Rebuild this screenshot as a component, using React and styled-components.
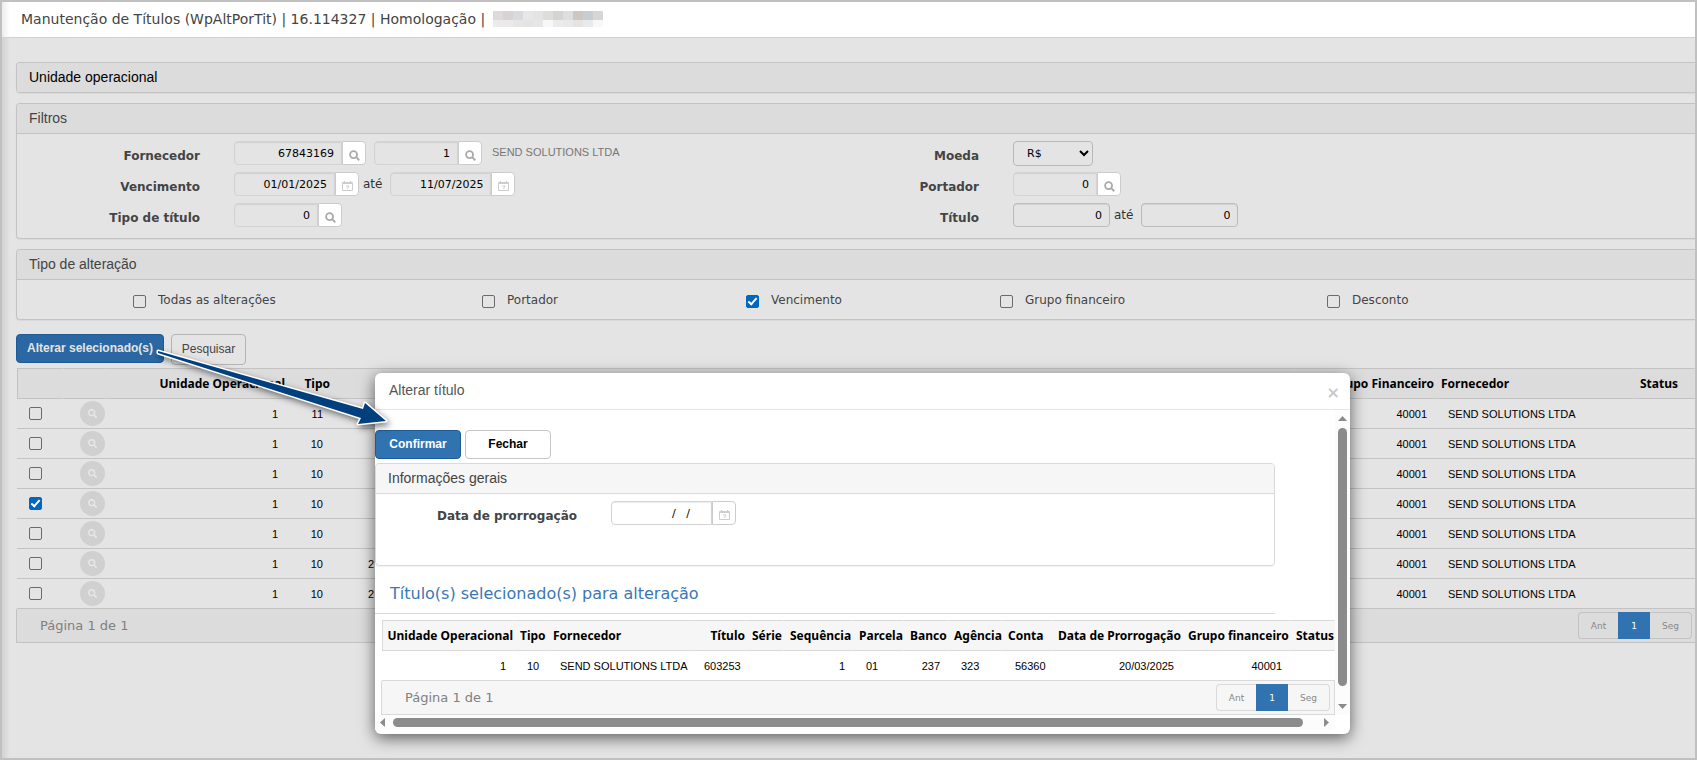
import React, { useState } from 'react';
import styled, { createGlobalStyle } from 'styled-components';
import { FaSearch } from 'react-icons/fa';

const GlobalStyle = createGlobalStyle`
  *, *::before, *::after {
    box-sizing: border-box;
  }

  body {
    margin: 0;
    font-family: "Liberation Sans", Arial, sans-serif;
    font-size: 11px;
    color: #000;
  }

  button, input, select {
    margin: 0;
    font-family: inherit;
  }
`

const verdana = '"DejaVu Sans", Verdana, sans-serif';
const tahoma = '"Noto Sans", Verdana, sans-serif';

const Page = styled.div`
  position: relative;
  min-height: 100vh;
  border: 2px solid #c0c0c0;
  background: linear-gradient(to right, #d2d2d2, #e4e4e4 8px);
  overflow: hidden;
`

const TitleBar = styled.header`
  display: flex;
  align-items: center;
  height: 36px;
  padding: 0 0 2px 19px;
  border-bottom: 1px solid #d2d2d2;
  background: linear-gradient(to right, #ececec, #fff 8px);
`

const PageTitle = styled.h1`
  margin: 0;
  font-family: ${verdana};
  font-size: 14px;
  font-weight: 400;
  line-height: 20px;
  color: #444;
`

const Masked = styled.div`
  display: grid;
  grid-template-columns: repeat(11, 10px);
  grid-template-rows: 9px 7px;
  margin-left: 8px;
`

const MaskCell = styled.span`
  background: ${p => p.$color};
`

const Main = styled.main`
  padding: 24px 0 40px 14px;
`

const Panel = styled.section`
  width: ${p => p.$width || 'auto'};
  margin-bottom: ${p => p.$last ? 14 : 10}px;
  border: 1px solid ${p => p.$light ? '#d9d9d9' : '#c3c3c3'};
  border-right-width: ${p => p.$light ? 1 : 0}px;
  border-radius: ${p => p.$light ? '4px' : '4px 0 0 4px'};
  box-shadow: 0 1px 1px rgba(0, 0, 0, .05);
`

const PanelTitle = styled.h2`
  margin: 0;
  padding: 0 12px;
  border-bottom: ${p => p.$alone ? 0 : 1}px solid ${p => p.$light ? '#d9d9d9' : '#c3c3c3'};
  border-radius: 3px 3px 0 0;
  background: ${p => p.$light ? '#f6f6f6' : '#dcdcdc'};
  font-size: 14px;
  font-weight: 400;
  line-height: 29px;
  color: ${p => p.$alone ? '#000' : '#444'};
`

const Filters = styled.div`
  display: grid;
  grid-template-columns: 1fr 1fr;
  padding: 7px 0 8px;
`

const FilterColumn = styled.div`
  display: flex;
  flex-direction: column;
  gap: 4px;
`

const Field = styled.div`
  display: grid;
  grid-template-columns: ${p => p.$labelWidth}px 1fr;
  column-gap: 34px;
  align-items: start;
`

const Label = styled.label`
  padding-top: 3px;
  font-family: ${verdana};
  font-size: 12px;
  font-weight: 700;
  line-height: 24px;
  text-align: right;
  white-space: nowrap;
  color: #444;
`

const Controls = styled.div`
  display: flex;
  gap: ${p => p.$gap || 8}px;
`

const Group = styled.div`
  display: flex;
`

const Input = styled.input`
  width: ${p => p.$width}px;
  height: 24px;
  padding: 0 7px;
  border: 1px solid ${p => p.$solid ? '#bcbcbc' : '#d3d3d3'};
  border-radius: ${p => p.$joined ? '4px 0 0 4px' : '4px'};
  background: transparent;
  box-shadow: inset 0 1px 1px rgba(0, 0, 0, .08);
  font-family: ${verdana};
  font-size: 11px;
  text-align: right;
  color: #000;
  outline: none;
`

const Select = styled.select`
  width: 80px;
  height: 25px;
  padding: 0 0 0 9px;
  border: 1px solid #b8b8b8;
  border-radius: 4px;
  background: transparent;
  font-family: ${verdana};
  font-size: 11px;
  color: #000;
`

const AddonButton = styled.button`
  display: flex;
  align-items: center;
  justify-content: center;
  width: 24px;
  height: 24px;
  padding: 4px 0 0;
  border: 1px solid #ccc;
  border-radius: 0 4px 4px 0;
  background: #fff;
  color: #aaa;
  cursor: pointer;
`

const Until = styled.span`
  margin-right: 4px;
  font-family: ${verdana};
  font-size: 12px;
  line-height: 24px;
  color: #333;
`

const Description = styled.span`
  padding-left: 2px;
  line-height: 22px;
  color: #777;
`

const Choices = styled.div`
  display: grid;
  grid-template-columns: 349fr 264fr 254fr 327fr 368fr;
  height: 39px;
  padding: 0 0 0 116px;
  align-items: center;
`

const Choice = styled.label`
  display: flex;
  align-items: center;
  gap: 12px;
  padding-top: 4px;
  font-family: ${verdana};
  font-size: 12px;
  line-height: 16px;
  color: #444;

  span {
    padding-bottom: 3px;
  }
`

const Checkbox = styled.input`
  appearance: none;
  display: block;
  flex: none;
  position: relative;
  width: 13px;
  height: 13px;
  margin: 0;
  border: 1px solid #6b6b6b;
  border-radius: 2px;

  &:checked {
    border-color: #0067c0;
    background: #0067c0;
  }

  &:checked::after {
    position: absolute;
    content: '';
    top: 0;
    left: 3px;
    width: 5px;
    height: 9px;
    border: solid #fff;
    border-width: 0 2px 2px 0;
    transform: rotate(42deg);
  }
`

const Actions = styled.div`
  display: flex;
  align-items: flex-start;
  gap: ${p => p.$gap}px;
`

const Button = styled.button`
  min-width: ${p => p.$width}px;
  height: ${p => p.$tall ? 31 : 29}px;
  padding: 0 0 1px;
  border: 1px solid ${p => p.$primary ? '#1e5a96' : p.$tall ? '#b4b4b4' : '#c6c6c6'};
  border-radius: 4px;
  background: ${p => p.$primary ? (p.$dim ? '#2b68a3' : '#3073b0') : 'transparent'};
  font-size: 12px;
  font-weight: ${p => p.$tall ? 400 : 700};
  color: ${p => p.$primary ? (p.$dim ? '#e4e4e4' : '#fff') : p.$tall ? '#444' : '#000'};
  cursor: pointer;
`

const MainGrid = styled.div`
  padding: 3px 0 0 1px;
`

const Table = styled.table`
  width: 100%;
  table-layout: fixed;
  border-collapse: separate;
  border-spacing: 0;
`

const Th = styled.th`
  height: 31px;
  padding: 0 0 0 ${p => p.$align === 'right' ? 0 : 6}px;
  border: 1px solid ${p => p.$light ? '#d9d9d9' : '#c3c3c3'};
  border-left: 0;
  border-right-color: ${p => p.$light ? '#f6f6f6' : '#dcdcdc'};
  background: ${p => p.$light ? '#f6f6f6' : '#dcdcdc'};
  font-family: ${tahoma};
  font-size: 12px;
  font-weight: 700;
  text-align: ${p => p.$align || 'left'};
  white-space: nowrap;

  &:first-child {
    border-left: 1px solid ${p => p.$light ? '#d9d9d9' : '#c3c3c3'};
  }
`

const Td = styled.td`
  height: 30px;
  padding: 0 ${p => p.$align === 'right' ? 8 : 0}px 0 ${p => p.$pad || 13}px;
  border-bottom: 1px solid ${p => p.$light ? '#d9d9d9' : '#c3c3c3'};
  font-size: 11px;
  text-align: ${p => p.$align || 'left'};
  white-space: nowrap;
`

const DetailButton = styled.button`
  display: flex;
  align-items: center;
  justify-content: center;
  width: 25px;
  height: 25px;
  padding: 0;
  border: 0;
  border-radius: 50%;
  background: #d0d0d0;
  color: #e8e8e8;
  cursor: pointer;
`

const TableFooter = styled.div`
  display: flex;
  align-items: center;
  justify-content: space-between;
  height: 34px;
  margin-left: -1px;
  padding: 0 ${p => p.$light ? 4 : 3}px 0 23px;
  border: 1px solid ${p => p.$light ? '#d9d9d9' : '#c3c3c3'};
  border-top: 0;
  border-right-width: ${p => p.$light ? 1 : 0}px;
  background: ${p => p.$light ? '#f6f6f6' : '#dcdcdc'};
  font-family: ${verdana};
  font-size: 13px;
  color: #808080;
`

const Pager = styled.nav`
  display: flex;
  height: 27px;
`

const PageLink = styled.a`
  display: flex;
  align-items: center;
  justify-content: center;
  width: ${p => p.$width}px;
  border: 1px solid ${p => p.$active ? '#3073b0' : p.$light ? '#d9d9d9' : '#c3c3c3'};
  border-width: ${p => p.$active ? '1px 0' : p.$last ? '1px 1px 1px 0' : '1px 0 1px 1px'};
  border-radius: ${p => p.$active ? 0 : p.$last ? '0 4px 4px 0' : '4px 0 0 4px'};
  background: ${p => p.$active ? '#3073b0' : 'transparent'};
  font-size: 9px;
  text-decoration: none;
  color: ${p => p.$active ? '#fff' : '#888'};
`

const Overlay = styled.div`
  position: absolute;
  top: 371px;
  left: 28px;
  right: 0;
  display: flex;
  justify-content: center;
`

const Modal = styled.div`
  width: 975px;
  max-width: 100%;
  padding-bottom: 4px;
  border-radius: 6px;
  background: #fff;
  box-shadow: 0 4px 16px rgba(0, 0, 0, .6);
`

const ModalHeader = styled.div`
  display: flex;
  align-items: center;
  justify-content: space-between;
  height: 37px;
  padding: 0 10px 0 14px;
  border-bottom: 1px solid #e5e5e5;
`

const ModalTitle = styled.h2`
  margin: 0;
  padding-bottom: 2px;
  font-size: 14px;
  font-weight: 400;
  color: #555;
`

const CloseButton = styled.button`
  padding: 3px 0 0;
  border: 0;
  background: none;
  font-family: ${verdana};
  font-size: 16px;
  font-weight: 700;
  line-height: 20px;
  color: #c8c8c8;
  cursor: pointer;
`

const ModalBody = styled.div`
  display: grid;
  grid-template-columns: 1fr 15px;
  grid-template-rows: auto 15px;
`

const ModalContent = styled.div`
  min-width: 0;
  padding-top: 20px;
  overflow: hidden;
`

const ExtensionBody = styled.div`
  height: 71px;
  padding-top: 7px;
`

const PanelSpace = styled.div`
  padding-top: 4px;
`

const SectionTitle = styled.h3`
  width: 900px;
  max-width: 100%;
  margin: 0 0 6px;
  padding: 7px 15px 8px;
  border-bottom: 1px solid #d9d9d9;
  font-family: ${verdana};
  font-size: 16px;
  font-weight: 400;
  line-height: 22px;
  color: #3a77b5;
`

const SelectedGrid = styled.div`
  padding-left: 7px;
`

const ScrollBar = styled.div`
  display: flex;
  flex-direction: ${p => p.$vertical ? 'column' : 'row'};
  align-items: center;
  justify-content: space-between;
  padding: ${p => p.$vertical ? '6px 0' : '0 6px 0 5px'};
  background: #fcfcfc;
`

const ScrollTrack = styled.div`
  display: flex;
  flex: 1;
  flex-direction: ${p => p.$vertical ? 'column' : 'row'};
  padding: ${p => p.$vertical ? '7px 0 18px' : '0 21px 0 8px'};
`

const ScrollThumb = styled.div`
  flex: 1;
  min-width: 9px;
  min-height: 9px;
  border-radius: 5px;
  background: #8b8b8b;
`

const Caret = styled.svg`
  display: block;
  flex: none;
  fill: #8b8b8b;
`

const Arrow = styled.svg`
  position: absolute;
  top: 338px;
  left: 148px;
  pointer-events: none;
  filter: drop-shadow(2px 3px 3px rgba(0, 0, 0, .5));
`

const maskColors = [
  '#dfdad7', '#d4d4d4', '#d9dade', '#e7e7e7', '#e4e5e2', '#dddeda', '#d4d4d4', '#dedede', '#cdc6c2', '#c9cdd1', '#d5d6d7',
  '#ebebeb', '#eaeaea', '#e6e6e6', '#e4e4e4', '#e5e7e7', '#f8f8f8', '#ebebeb', '#e9e9e9', '#e5e4e3', '#e9eaeb', '#f8f8f8',
];

const options = ['Todas as alterações', 'Portador', 'Vencimento', 'Grupo financeiro', 'Desconto'];

const titles = [
  { type: '11', number: '' },
  { type: '10', number: '' },
  { type: '10', number: '' },
  { type: '10', number: '' },
  { type: '10', number: '' },
  { type: '10', number: '2' },
  { type: '10', number: '2' },
];

const selectedColumns = [
  { label: 'Unidade Operacional', width: 132, align: 'right', value: '1', cell: 'right' },
  { label: 'Tipo', width: 33, value: '10', cell: 'right' },
  { label: 'Fornecedor', width: 144, value: 'SEND SOLUTIONS LTDA' },
  { label: 'Título', width: 55, align: 'right', value: '603253', cell: 'right' },
  { label: 'Série', width: 38, value: '' },
  { label: 'Sequência', width: 69, value: '1', cell: 'right' },
  { label: 'Parcela', width: 51, value: '01' },
  { label: 'Banco', width: 44, value: '237', cell: 'right' },
  { label: 'Agência', width: 54, value: '323' },
  { label: 'Conta', width: 50, value: '56360' },
  { label: 'Data de Prorrogação', width: 130, align: 'right', value: '20/03/2025', cell: 'right' },
  { label: 'Grupo financeiro', width: 108, value: '40001', cell: 'right' },
  { label: 'Status', width: 45, value: '' },
];

const SearchIcon = () => (
  <svg width="11" height="11" viewBox="0 0 12 12" fill="none" stroke="currentColor" strokeWidth="2">
    <circle cx="5" cy="5" r="3.8" />
    <path d="M7.8 7.8 L11.2 11.2" />
  </svg>
)

const CalendarIcon = () => (
  <svg width="11" height="10" viewBox="0 0 11 10" fill="none" stroke="#cdcdcd">
    <path d="M.5 1.5h10v8H.5zM.5 2.5h10M2.5 0v2M8.5 0v2" />
    <path d="M4 5h3L5.5 8" />
  </svg>
)

const LookupField = ({ id, width, defaultValue, calendar, label }) => (
  <Group>
    <Input id={id} aria-label={label} $width={width} $joined defaultValue={defaultValue} />
    <AddonButton type="button" aria-label={calendar ? 'Calendário' : 'Buscar'}>
      {calendar ? <CalendarIcon /> : <SearchIcon />}
    </AddonButton>
  </Group>
)

const Pagination = ({ light }) => (
  <TableFooter $light={light}>
    <span>Página 1 de 1</span>
    <Pager>
      <PageLink href="#" $width={40} $light={light}>Ant</PageLink>
      <PageLink href="#" $width={32} $active>1</PageLink>
      <PageLink href="#" $width={42} $light={light} $last>Seg</PageLink>
    </Pager>
  </TableFooter>
)

const AlterModal = () => (
  <Overlay>
    <Modal role="dialog" aria-labelledby="modal-title">
      <ModalHeader>
        <ModalTitle id="modal-title">Alterar título</ModalTitle>
        <CloseButton type="button">×</CloseButton>
      </ModalHeader>
      <ModalBody>
        <ModalContent>
          <Actions $gap={4}>
            <Button type="button" $primary $width={86}>Confirmar</Button>
            <Button type="button" $width={86}>Fechar</Button>
          </Actions>
          <PanelSpace>
            <Panel $light $width="900px">
              <PanelTitle $light>Informações gerais</PanelTitle>
              <ExtensionBody>
                <Field $labelWidth={201}>
                  <Label htmlFor="extension">Data de prorrogação</Label>
                  <LookupField id="extension" width={101} defaultValue="  /   /    " calendar />
                </Field>
              </ExtensionBody>
            </Panel>
          </PanelSpace>
          <SectionTitle>Título(s) selecionado(s) para alteração</SectionTitle>
          <SelectedGrid>
            <Table>
              <colgroup>
                {selectedColumns.map(c => <col key={c.label} width={c.width} />)}
              </colgroup>
              <thead>
                <tr>
                  {selectedColumns.map(c => <Th key={c.label} $light $align={c.align}>{c.label}</Th>)}
                </tr>
              </thead>
              <tbody>
                <tr>
                  {selectedColumns.map(c => <Td key={c.label} $light $align={c.cell}>{c.value}</Td>)}
                </tr>
              </tbody>
            </Table>
            <Pagination light />
          </SelectedGrid>
        </ModalContent>
        <ScrollBar $vertical>
          <Caret width="9" height="5"><path d="M4.5 0 9 5H0z" /></Caret>
          <ScrollTrack $vertical><ScrollThumb /></ScrollTrack>
          <Caret width="9" height="5"><path d="M0 0h9L4.5 5z" /></Caret>
        </ScrollBar>
        <ScrollBar>
          <Caret width="5" height="9"><path d="M5 0v9L0 4.5z" /></Caret>
          <ScrollTrack><ScrollThumb /></ScrollTrack>
          <Caret width="5" height="9"><path d="M0 0v9l5-4.5z" /></Caret>
        </ScrollBar>
      </ModalBody>
    </Modal>
  </Overlay>
)

export default function App() {
  const [option, setOption] = useState('Vencimento');
  const [selected, setSelected] = useState([3]);

  const toggleRow = index => {
    setSelected(selected.includes(index) ? selected.filter(i => i !== index) : [...selected, index])
  }

  return (
    <Page>
      <GlobalStyle />
      <TitleBar>
        <PageTitle>Manutenção de Títulos (WpAltPorTit) | 16.114327 | Homologação |</PageTitle>
        <Masked>
          {maskColors.map((color, i) => <MaskCell key={i} $color={color} />)}
        </Masked>
      </TitleBar>
      <Main>
        <Panel>
          <PanelTitle $alone>Unidade operacional</PanelTitle>
        </Panel>
        <Panel>
          <PanelTitle>Filtros</PanelTitle>
          <Filters>
            <FilterColumn>
              <Field $labelWidth={183}>
                <Label htmlFor="supplier">Fornecedor</Label>
                <Controls>
                  <LookupField id="supplier" width={108} defaultValue="67843169" />
                  <LookupField label="Filial" width={84} defaultValue="1" />
                  <Description>SEND SOLUTIONS LTDA</Description>
                </Controls>
              </Field>
              <Field $labelWidth={183}>
                <Label htmlFor="due">Vencimento</Label>
                <Controls $gap={4}>
                  <LookupField id="due" width={101} defaultValue="01/01/2025" calendar />
                  <Until>até</Until>
                  <LookupField label="Vencimento final" width={101} defaultValue="11/07/2025" calendar />
                </Controls>
              </Field>
              <Field $labelWidth={183}>
                <Label htmlFor="kind">Tipo de título</Label>
                <LookupField id="kind" width={84} defaultValue="0" />
              </Field>
            </FilterColumn>
            <FilterColumn>
              <Field $labelWidth={123}>
                <Label htmlFor="currency">Moeda</Label>
                <Controls>
                  <Select id="currency"><option>R$</option></Select>
                </Controls>
              </Field>
              <Field $labelWidth={123}>
                <Label htmlFor="holder">Portador</Label>
                <LookupField id="holder" width={84} defaultValue="0" />
              </Field>
              <Field $labelWidth={123}>
                <Label htmlFor="title">Título</Label>
                <Controls $gap={4}>
                  <Input id="title" $width={97} $solid defaultValue="0" />
                  <Until>até</Until>
                  <Input aria-label="Título final" $width={97} $solid defaultValue="0" />
                </Controls>
              </Field>
            </FilterColumn>
          </Filters>
        </Panel>
        <Panel $last>
          <PanelTitle>Tipo de alteração</PanelTitle>
          <Choices>
            {options.map(name => (
              <Choice key={name}>
                <Checkbox type="checkbox" checked={option === name} onChange={() => setOption(name)} />
                <span>{name}</span>
              </Choice>
            ))}
          </Choices>
        </Panel>
        <Actions $gap={7}>
          <Button type="button" $primary $dim $width={148}>Alterar selecionado(s)</Button>
          <Button type="button" $tall $width={75}>Pesquisar</Button>
        </Actions>
        <MainGrid>
          <Table>
            <colgroup>
              <col width="47" />
              <col width="42" />
              <col width="180" />
              <col width="45" />
              <col />
              <col width="140" />
              <col width="199" />
              <col width="61" />
            </colgroup>
            <thead>
              <tr>
                <Th />
                <Th />
                <Th $align="right">Unidade Operacional</Th>
                <Th $align="right">Tipo</Th>
                <Th />
                <Th $align="right">Grupo Financeiro</Th>
                <Th>Fornecedor</Th>
                <Th>Status</Th>
              </tr>
            </thead>
            <tbody>
              {titles.map((title, i) => (
                <tr key={i}>
                  <Td $pad={12}>
                    <Checkbox
                      type="checkbox"
                      aria-label={`Selecionar título ${i + 1}`}
                      checked={selected.includes(i)}
                      onChange={() => toggleRow(i)}
                    />
                  </Td>
                  <Td $pad={16}>
                    <DetailButton type="button" aria-label="Detalhes"><FaSearch size={9} /></DetailButton>
                  </Td>
                  <Td $align="right">1</Td>
                  <Td $align="right">{title.type}</Td>
                  <Td $pad={37}>{title.number}</Td>
                  <Td $align="right">40001</Td>
                  <Td>SEND SOLUTIONS LTDA</Td>
                  <Td />
                </tr>
              ))}
            </tbody>
          </Table>
          <Pagination />
        </MainGrid>
      </Main>
      <AlterModal />
      <Arrow width="260" height="100" viewBox="150 340 260 100">
        <path
          d="M158 351 L363 409 L365 403 L386 421 L358 424 L361 418 L158 353 Z"
          fill="#00407f"
          stroke="#fff"
          strokeWidth="3"
          strokeLinejoin="round"
          paintOrder="stroke"
        />
      </Arrow>
    </Page>
  );
}
